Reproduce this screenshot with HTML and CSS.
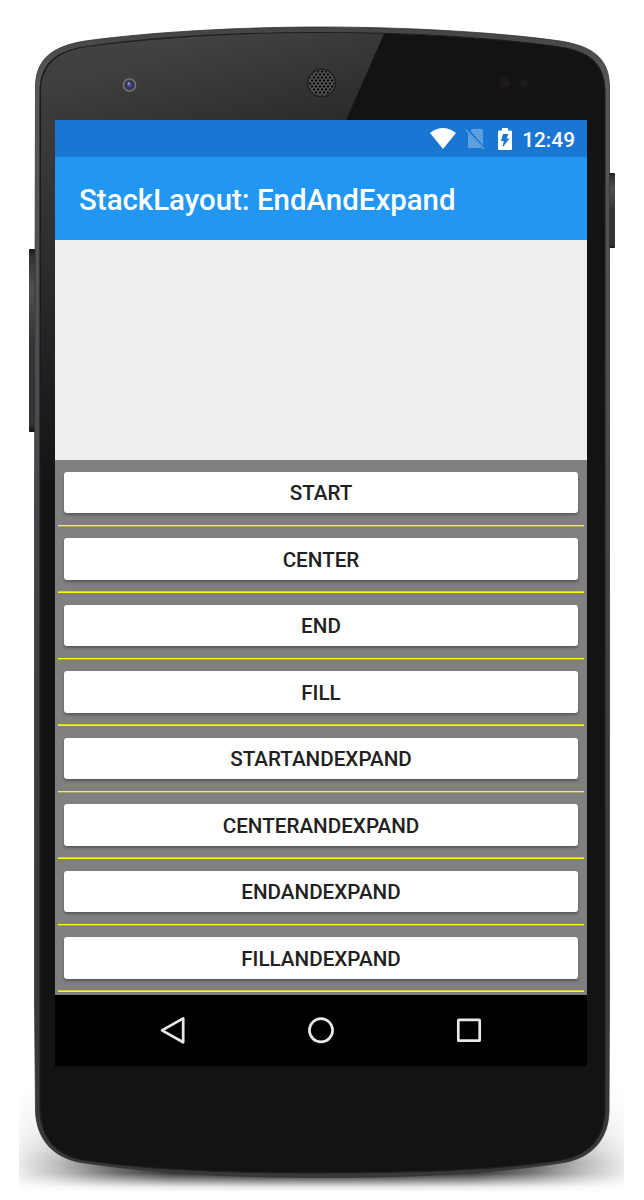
FILE: index.html
```html
<!DOCTYPE html>
<html lang="en">
<head>
<meta charset="utf-8">
<title>StackLayout: EndAndExpand</title>
<link rel="stylesheet" href="styles.css">
</head>
<body>
<div class="device">
  <svg class="shell" width="644" height="1200" viewBox="0 0 644 1200" aria-hidden="true">
    <defs>
      <linearGradient id="glare" x1="0" y1="30" x2="0" y2="480" gradientUnits="userSpaceOnUse">
        <stop offset="0" stop-color="#434343"/><stop offset=".2" stop-color="#3c3c3c"/><stop offset=".6" stop-color="#282828"/><stop offset="1" stop-color="#141414"/>
      </linearGradient>
      <linearGradient id="shade" x1="180" y1="40" x2="230" y2="170" gradientUnits="userSpaceOnUse">
        <stop offset="0" stop-color="#000" stop-opacity="0"/><stop offset="1" stop-color="#000" stop-opacity=".3"/>
      </linearGradient>
      <linearGradient id="key" x1="0" y1="0" x2="0" y2="1">
        <stop offset="0" stop-color="#171717"/><stop offset=".04" stop-color="#333"/><stop offset=".22" stop-color="#505050"/><stop offset=".5" stop-color="#343434"/><stop offset=".96" stop-color="#333"/><stop offset="1" stop-color="#111"/>
      </linearGradient>
      <linearGradient id="rim" x1="0" y1="0" x2="0" y2="1">
        <stop offset="0" stop-color="#444"/><stop offset=".05" stop-color="#57585b"/><stop offset=".3" stop-color="#4c4d51"/><stop offset=".6" stop-color="#3c3d3f"/><stop offset="1" stop-color="#383838"/>
      </linearGradient>
      <linearGradient id="floor" x1="19" y1="0" x2="624" y2="0" gradientUnits="userSpaceOnUse">
        <stop offset="0" stop-color="#000" stop-opacity=".08"/><stop offset=".07" stop-color="#000" stop-opacity=".28"/><stop offset=".15" stop-color="#000" stop-opacity=".58"/><stop offset=".25" stop-color="#000" stop-opacity=".85"/><stop offset=".4" stop-color="#000" stop-opacity=".98"/>
        <stop offset=".6" stop-color="#000" stop-opacity=".98"/><stop offset=".75" stop-color="#000" stop-opacity=".85"/><stop offset=".85" stop-color="#000" stop-opacity=".58"/><stop offset=".93" stop-color="#000" stop-opacity=".28"/><stop offset="1" stop-color="#000" stop-opacity=".08"/>
      </linearGradient>
      <linearGradient id="fade" x1="0" y1="1088" x2="0" y2="1192" gradientUnits="userSpaceOnUse">
        <stop offset="0" stop-color="#000"/><stop offset=".45" stop-color="#666"/><stop offset=".72" stop-color="#fff"/><stop offset=".82" stop-color="#e8e8e8"/><stop offset=".89" stop-color="#777"/><stop offset=".95" stop-color="#1c1c1c"/><stop offset="1" stop-color="#000"/>
      </linearGradient>
      <mask id="fall" maskUnits="userSpaceOnUse" x="19" y="1088" width="605" height="104"><rect x="19" y="1088" width="605" height="104" fill="url(#fade)"/></mask>
      <radialGradient id="lens"><stop offset="0" stop-color="#5a5ab4"/><stop offset=".4" stop-color="#33337c"/><stop offset=".6" stop-color="#343434"/><stop offset=".85" stop-color="#7d7d7d"/><stop offset="1" stop-color="#444"/></radialGradient>
      <pattern id="mesh" width="4" height="6" patternUnits="userSpaceOnUse" x="320" y="82">
        <rect width="4" height="6" fill="#5a5a5a"/><circle cx="2" cy="1.5" r="1.25" fill="#050505"/><circle cx="0" cy="4.5" r="1.25" fill="#050505"/><circle cx="4" cy="4.5" r="1.25" fill="#050505"/>
      </pattern>
      <clipPath id="face"><path d="M322 33C250 33 160 37 87 47C58 51 41 64 41 92V1110C42 1138 58 1154 82 1159C150 1170 230 1172.500 322 1172.500S500 1170 562 1159C587 1154 603 1138 604 1110V92C604 64 587 51 557 47C484 37 394 33 322 33Z"/></clipPath>
    </defs>
    <rect x="19" y="1088" width="605" height="104" fill="url(#floor)" mask="url(#fall)"/>
    <rect x="29" y="249" width="8" height="183" rx="1" fill="url(#key)"/>
    <rect x="608" y="173" width="7" height="75" rx="1" fill="url(#key)"/>
    <path d="M322 27C240 27 150 32 85 41C54 46 35.500 58 35.500 87L34.500 500V1000L35.500 1112C37 1139 52 1156 78 1162C150 1173 230 1177.500 322 1177.500S500 1173 567 1162C593 1156 608 1139 609 1112L609.500 1000V87C609.500 58 592 46 560 41C496 32 404 27 322 27Z" fill="url(#rim)" stroke="#333" stroke-width=".8"/>
    <path d="M322 32.500C250 32.500 160 36.500 87 46.500C57 50.500 40 63 40 92V1110C41 1139 57 1155 82 1160C150 1170.500 230 1173 322 1173S500 1170.500 562 1160C588 1155 604 1139 605 1110V92C605 63 588 50.500 557 46.500C484 36.500 394 32.500 322 32.500Z" fill="#131313" stroke="#202020" stroke-width="1.200"/>
    <g clip-path="url(#face)">
      <path d="M30 20H390L346 120L205 480H30Z" fill="url(#glare)"/>
      <path d="M30 20H390L346 120H30Z" fill="url(#shade)"/>
    </g>
    <circle cx="129.500" cy="85" r="7.200" fill="url(#lens)"/>
    <circle cx="128.800" cy="83.500" r="1.200" fill="#9aa0dc"/>
    <circle cx="321.500" cy="83" r="14" fill="#222" stroke="#191919"/>
    <circle cx="321.500" cy="83" r="13" fill="url(#mesh)" stroke="#414141" stroke-width=".8"/>
    <circle cx="505" cy="82.500" r="6" fill="#1b1919"/><circle cx="506" cy="83" r="1" fill="#3a211d"/>
    <circle cx="524" cy="83" r="4" fill="#1d1c1c"/>
  </svg>
  <main class="screen">
    <header class="status">
      <svg class="wifi" width="26" height="21" viewBox="0 0 26 21"><path d="M0 5Q13-5 26 5L13 21Z" fill="#fff"/></svg>
      <svg class="sim" width="20" height="22" viewBox="0 0 20 22"><path d="M7 1H16.500Q18 1 18 2.500V17L5.500 3ZM3 5.500L17 20H4.500Q3 20 3 18.500Z" fill="#5fa0e1"/><path d="M1 2L19 21" stroke="#5fa0e1" stroke-width="1.600"/></svg>
      <svg class="battery" width="14" height="22" viewBox="0 0 14 22"><path d="M1 2.500H4V0H10V2.500H13Q14 2.500 14 3.500V21Q14 22 13 22H1Q0 22 0 21V3.500Q0 2.500 1 2.500Z" fill="#fff"/><path d="M5 6H10.500L8.500 10.500H11.500L4.500 19.500L5.800 13H3Z" fill="#1976d2"/></svg>
      <span class="clock">12:49</span>
    </header>
    <h1 class="title">StackLayout: EndAndExpand</h1>
    <section class="page">
      <div class="stack">
        <div class="row"><button class="option">START</button></div>
        <div class="row"><button class="option">CENTER</button></div>
        <div class="row"><button class="option">END</button></div>
        <div class="row"><button class="option">FILL</button></div>
        <div class="row"><button class="option">STARTANDEXPAND</button></div>
        <div class="row"><button class="option">CENTERANDEXPAND</button></div>
        <div class="row"><button class="option">ENDANDEXPAND</button></div>
        <div class="row"><button class="option">FILLANDEXPAND</button></div>
      </div>
    </section>
    <nav class="nav">
      <svg width="28" height="30" viewBox="0 0 28 30"><path d="M3 15.400L24.200 3.400V27.300Z"/></svg>
      <svg width="28" height="30" viewBox="0 0 28 30"><circle cx="14" cy="15.300" r="11.600"/></svg>
      <svg width="28" height="30" viewBox="0 0 28 30"><rect x="3.300" y="4.900" width="21.400" height="20.800" rx=".5"/></svg>
    </nav>
  </main>
</div>
</body>
</html>
```
FILE: styles.css
```css
* { box-sizing: border-box; }
body { margin: 0; background: #fff; font-family: Roboto, "Noto Sans", sans-serif; }
.device { position: relative; width: 644px; height: 1200px; padding: 120px 57px 0 55px; overflow: hidden; }
.shell { position: absolute; inset: 0; }
.screen { position: relative; display: flex; flex-direction: column; height: 946px; background: #eee; }
.status { display: flex; align-items: center; justify-content: flex-end; height: 37px; padding-right: 12px; background: #1976d2; color: #fff; }
.wifi { margin-right: 9px; }
.sim { margin-right: 13px; }
.battery { margin-right: 10px; }
.clock { font-size: 20.8px; font-weight: 500; line-height: 35px; padding-top: 3px; }
.title { height: 83px; margin: 0; padding: 2px 24px 0; background: #2196f3; color: #fff; font-size: 29.45px; font-weight: 500; line-height: 83px; white-space: nowrap; }
.page { flex: 1; display: flex; flex-direction: column; justify-content: flex-end; }
.stack { padding: 0 3px 3px; background: #808080; }
.row { height: 67px; padding: 12px 6px; }
.row:nth-child(odd) { background: linear-gradient(#ff0 0 1px, #a6a65a 1px) 0 65px / 100% 2px no-repeat; }
.row:nth-child(even) { height: 66px; padding-top: 11px; background: linear-gradient(#d0d02a 0 1px, #ff0 1px) 0 64px / 100% 2px no-repeat; }
.option { display: block; width: 100%; height: 41px; padding: 1px 0 0; border: 0; border-radius: 3px; background: #fff; color: #212121; font: 500 20.65px/40px Roboto, "Noto Sans", sans-serif; box-shadow: 0 2px 3px rgba(0, 0, 0, .32); }
.row:nth-child(even) .option { height: 42px; }
.nav { display: flex; align-items: center; justify-content: center; gap: 120px; height: 71px; padding-bottom: 1px; background: #000; }
.nav svg { fill: none; stroke: #e8e8e8; stroke-width: 2.7; stroke-linejoin: round; }
```
